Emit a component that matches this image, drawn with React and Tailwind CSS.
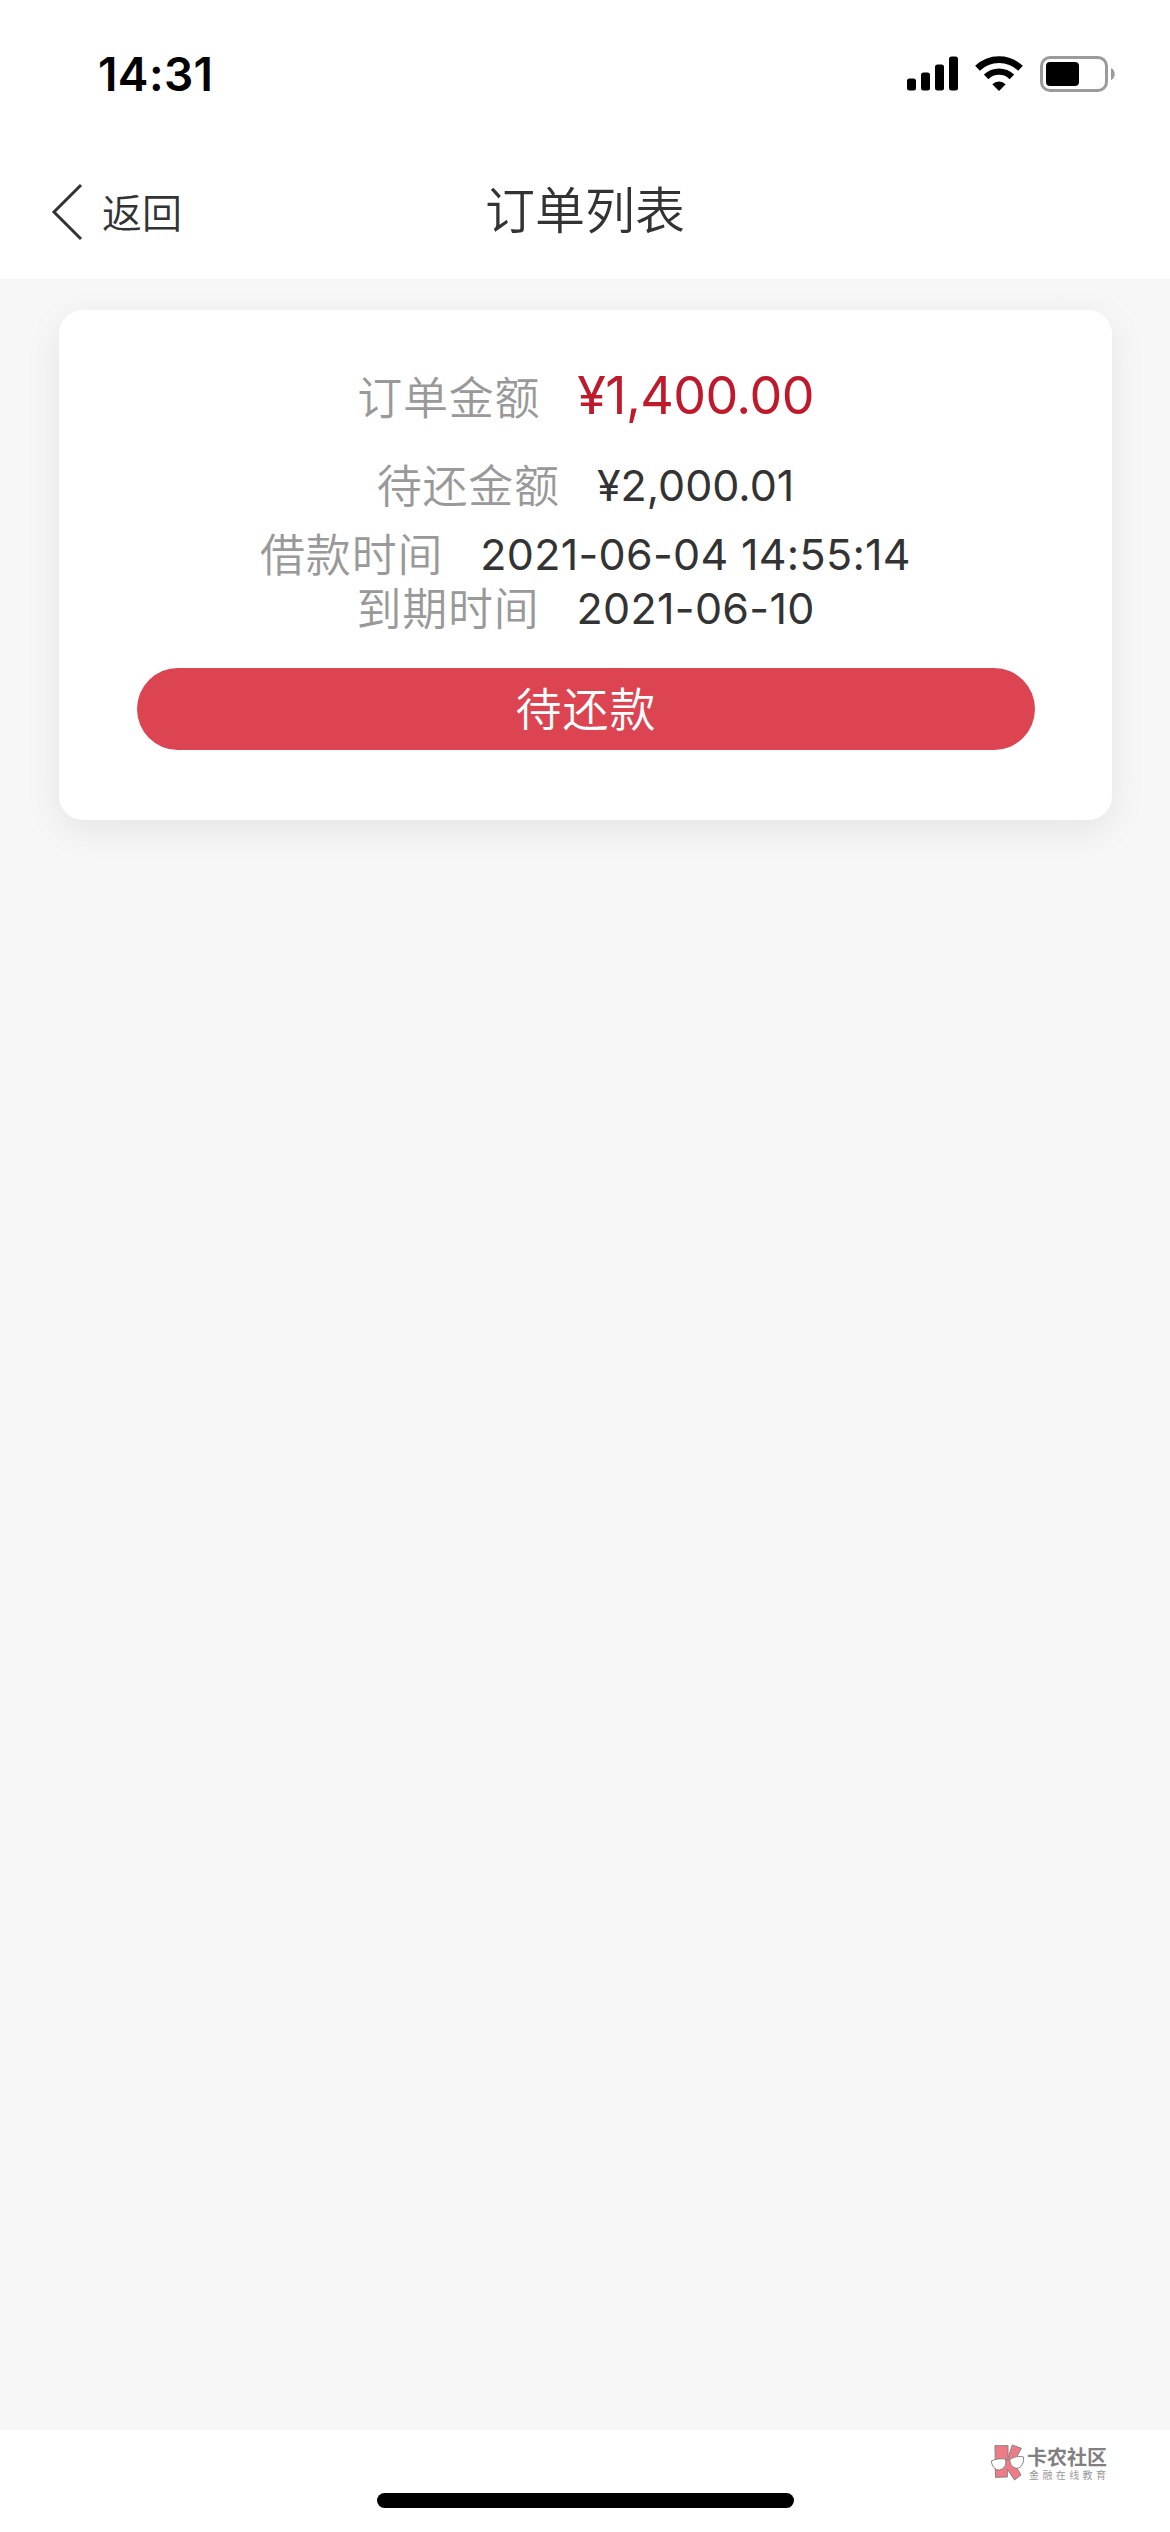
import React from "react";

const SignalIcon = () => (
  <svg width="52" height="36" viewBox="0 0 52 36" fill="#000">
    <rect x="0" y="22.5" width="9" height="12" rx="2.5" />
    <rect x="14" y="16.5" width="9" height="18" rx="2.5" />
    <rect x="28" y="8.5" width="9" height="26" rx="2.5" />
    <rect x="42" y="0.5" width="9" height="34" rx="2.5" />
  </svg>
);

const WifiIcon = () => (
  <svg width="50" height="36" viewBox="0 0 50 36" fill="none" stroke="#000">
    <path d="M3.5 12.3A31 31 0 0 1 46.5 12.3" strokeWidth="6.8" />
    <path d="M12.1 20.9A18.5 18.5 0 0 1 37.9 20.9" strokeWidth="6.4" />
    <path d="M18.3 28.2A9.6 9.6 0 0 1 31.7 28.2L25 35Z" fill="#000" stroke="none" />
  </svg>
);

const BatteryIcon = () => (
  <svg width="76" height="36" viewBox="0 0 76 36">
    <rect x="1.5" y="1.5" width="65" height="33" rx="8.5" fill="none" stroke="#9b9b9b" strokeWidth="3" />
    <rect x="6" y="6" width="33" height="24" rx="4" fill="#000" />
    <path d="M71 12C76 14 76 22 71 24Z" fill="#9b9b9b" />
  </svg>
);

const GlassesLogo = () => (
  <svg width="36" height="38" viewBox="0 0 36 38" stroke="#8a7f80" strokeWidth="1">
    <path d="M5 1.7H18V14L22.3 1L31.3 4.3L23.5 18.5L31 31L24.5 36L17.3 25V33L5.5 33.3Z" fill="#ee7c87" />
    <path d="M1.3 17C5 15 11 14.2 15.5 15C17 21 14 25 9.5 26C4.5 26 2 22 1.3 17Z" fill="#fff" />
    <path d="M19.8 15.5C24 12.5 29 12 33.6 13C34 19 31.5 24 27 24.3C22.5 24 20 20.5 19.8 15.5Z" fill="#fff" />
    <path d="M15.5 16L19.8 15.5" fill="none" />
  </svg>
);

const rows = [
  {
    label: "订单金额",
    value: "¥1,400.00",
    row: "h-[68px]",
    text: "text-[52px] text-[#bf1a2b] tracking-[-0.6px] pb-[3px]",
  },
  {
    label: "待还金额",
    value: "¥2,000.01",
    row: "h-[64px] mt-[22px]",
    text: "text-[43px] text-[#333]",
  },
  {
    label: "借款时间",
    value: "2021-06-04 14:55:14",
    row: "h-[54px] mt-[10px]",
    text: "text-[43px] text-[#333] tracking-[0.3px]",
  },
  {
    label: "到期时间",
    value: "2021-06-10",
    row: "h-[54px]",
    text: "text-[43px] text-[#333] tracking-[0.3px]",
  },
];

const OrderCard = () => (
  <div className="mr-[58px] ml-[59px] h-[510px] rounded-3xl bg-white pt-[53px] shadow-[0_10px_36px_rgba(0,0,0,0.08)]">
    {rows.map((item) => (
      <div key={item.label} className={`flex items-center justify-center gap-[37px] whitespace-nowrap ${item.row}`}>
        <span className="pt-[2px] text-[45px] leading-none font-[350] tracking-[0.8px] text-[#999]">{item.label}</span>
        <span className={`leading-none ${item.text}`}>{item.value}</span>
      </div>
    ))}
    <button className="mx-[78px] mt-[33px] flex h-[82px] w-[898px] items-center justify-center rounded-full bg-[#dc4451] text-[46px] leading-none font-[350] tracking-[1px] text-white">
      待还款
    </button>
  </div>
);

export default function App() {
  return (
    <div className="flex h-[2532px] w-[1170px] flex-col bg-[#f7f7f7] font-['Inter','Noto_Sans_CJK_SC',sans-serif]">
      {/* Status bar */}
      <div className="flex h-[148px] items-center justify-between bg-white pr-[54px] pl-[98px]">
        <span className="text-[46px] leading-none font-semibold tracking-[0.4px] text-black">14:31</span>
        <div className="flex items-center">
          <SignalIcon />
          <span className="w-[15px]" />
          <WifiIcon />
          <span className="w-[16px]" />
          <BatteryIcon />
        </div>
      </div>

      {/* Nav bar */}
      <header className="grid h-[131px] grid-cols-3 items-center bg-white pb-[6px] text-[#333]">
        <div className="flex items-center pl-[50px]">
          <svg width="34" height="60" viewBox="0 0 34 60" fill="none" stroke="#333" strokeWidth="3">
            <path d="M31 4L4 31L31 58" />
          </svg>
          <span className="ml-[18px] pt-[6px] text-[40px] leading-none font-[350]">返回</span>
        </div>
        <h1 className="text-center text-[50px] leading-none font-[350]">订单列表</h1>
      </header>

      <main className="flex-1 pt-[31px]">
        <OrderCard />
      </main>

      {/* Bottom bar */}
      <footer className="flex h-[102px] flex-col bg-white pt-[14px]">
        <div className="flex h-[38px] items-center gap-px self-end pr-[61px]">
          <GlassesLogo />
          <div className="flex w-[82px] flex-col pt-[2px] whitespace-nowrap">
            <span className="text-[20px] leading-[20px] font-bold text-[#808080]">卡农社区</span>
            <span className="mt-px ml-[2px] text-[10px] leading-[12px] tracking-[3.4px] text-[#999]">金融在线教育</span>
          </div>
        </div>
        <div className="mx-auto mt-[11px] h-[15px] w-[417px] shrink-0 rounded-full bg-black" />
      </footer>
    </div>
  );
}
